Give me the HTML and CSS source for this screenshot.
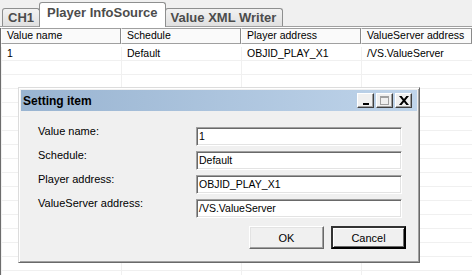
FILE: index.html
```html
<!DOCTYPE html>
<html lang="en">
<head>
  <meta charset="UTF-8" />
  <title>Setting item</title>
  <link rel="stylesheet" href="styles.css">
</head>
<body>
  <div class="tabs">
    <div class="tab">CH1</div>
    <div class="tab active">Player InfoSource</div>
    <div class="tab">Value XML Writer</div>
  </div>

  <div class="list">
    <div class="list-head">
      <div class="col">Value name</div>
      <div class="col">Schedule</div>
      <div class="col">Player address</div>
      <div class="col">ValueServer address</div>
    </div>
    <div class="list-body">
      <div class="row">
        <div class="cell">1</div>
        <div class="cell">Default</div>
        <div class="cell">OBJID_PLAY_X1</div>
        <div class="cell">/VS.ValueServer</div>
      </div>
    </div>
  </div>

  <div class="dialog">
    <div class="titlebar">
      <span class="title">Setting item</span>
      <div class="caption-btns">
        <div class="cap-btn"><span class="glyph-min"></span></div>
        <div class="cap-btn"><span class="glyph-max"></span></div>
        <div class="cap-btn">
          <svg width="10" height="9" viewBox="0 0 10 9"><path d="M0 0h2.6L5 3.1 7.4 0H10L6.3 4.5 10 9H7.4L5 5.9 2.6 9H0l3.7-4.5z" fill="#000"/></svg>
        </div>
      </div>
    </div>
    <div class="dialog-body">
      <div class="field"><label>Value name:</label><div class="edit">1</div></div>
      <div class="field"><label>Schedule:</label><div class="edit">Default</div></div>
      <div class="field"><label>Player address:</label><div class="edit">OBJID_PLAY_X1</div></div>
      <div class="field"><label>ValueServer address:</label><div class="edit">/VS.ValueServer</div></div>
      <div class="buttons">
        <button class="btn">OK</button>
        <button class="btn default">Cancel</button>
      </div>
    </div>
  </div>
</body>
</html>
```

FILE: styles.css
```css
body {
  margin: 0;
  width: 472px;
  height: 275px;
  overflow: hidden;
  background: #fff;
  font-family: 'Liberation Sans', Arial, sans-serif;
  font-size: 11px;
  color: #000;
  position: relative;
}
.tabs {
  height: 27px;
  box-sizing: border-box;
  background: #f0f0f0;
  border-bottom: 1px solid #a0a0a0;
  display: flex;
  align-items: flex-end;
  padding-left: 2px;
}
.tab {
  height: 18px;
  padding: 0 5px;
  box-sizing: border-box;
  border: 1px solid #8e8f8f;
  border-bottom: none;
  border-radius: 3px 3px 0 0;
  background: linear-gradient(#f2f2f2, #e0e0e0);
  font-weight: bold;
  font-size: 13px;
  line-height: 17px;
  color: #4c4c4c;
}
.tab + .tab { margin-left: -1px; }
.tab:last-child { padding-right: 6px; }
.tab.active {
  height: 25px;
  line-height: 20px;
  background: #fff;
  padding: 0 7px;
  margin-bottom: -1px;
  position: relative;
  z-index: 1;
}
.list {
  border-left: 1px solid #6d6d6d;
  margin-top: 1px;
  height: 250px;
  font-size: 10.5px;
}
.list-head {
  display: grid;
  grid-template-columns: 120px 120px 120px 1fr;
  height: 16px;
}
.col {
  box-sizing: border-box;
  border: 1px solid #a0a0a0;
  border-left: 1px solid #fff;
  border-right-color: #8a8a8a;
  background: #fafafa;
  padding-left: 5px;
  line-height: 13px;
  white-space: nowrap;
  overflow: hidden;
}
.list-body {
  margin-top: 3px;
  height: 230px;
  background:
    linear-gradient(to bottom, transparent 13px, #f0f0f0 13px) 0 0 / 100% 14px,
    linear-gradient(to right, transparent 119px, #f0f0f0 119px) 1px 0 / 120px 100%;
}
.row {
  display: grid;
  grid-template-columns: 120px 120px 120px 1fr;
  height: 14px;
}
.cell {
  padding-left: 6px;
  line-height: 13px;
  white-space: nowrap;
}
.dialog {
  position: absolute;
  left: 18px;
  top: 87px;
  width: 402px;
  height: 176px;
  box-sizing: border-box;
  background: #f0f0f0;
  border: 1px solid;
  border-color: #dcdcdc #696969 #696969 #dcdcdc;
  box-shadow: inset 1px 1px #fff, inset -1px -1px #a0a0a0;
  padding: 2px;
  display: flex;
  flex-direction: column;
}
.titlebar {
  height: 21px;
  flex: none;
  background: linear-gradient(to right, #99b4d1, #bfd4ea);
  display: flex;
  align-items: center;
  padding: 0 5px 0 2px;
}
.title {
  font-weight: bold;
  font-size: 12px;
  flex: 1;
}
.caption-btns {
  display: flex;
  gap: 2px;
}
.cap-btn {
  width: 17px;
  height: 15px;
  box-sizing: border-box;
  background: #f0f0f0;
  border: 1px solid;
  border-color: #fff #404040 #404040 #fff;
  box-shadow: inset -1px -1px #a0a0a0;
  display: flex;
  align-items: center;
  justify-content: center;
}
.glyph-min {
  width: 6px;
  height: 2px;
  background: #000;
  margin-top: 6px;
}
.glyph-max {
  width: 7px;
  height: 6px;
  border: 1px solid #a0a0a0;
  border-top-width: 2px;
}
.dialog-body {
  display: flex;
  flex-direction: column;
  gap: 5px;
  padding: 16px 11px 0 17px;
}
.field {
  display: flex;
  align-items: flex-start;
}
.field label {
  width: 158px;
  line-height: 13px;
  margin-top: -2px;
}
.edit {
  width: 206px;
  height: 19px;
  box-sizing: border-box;
  background: #fff;
  border: 1px solid;
  border-color: #a0a0a0 #fff #fff #a0a0a0;
  box-shadow: inset 1px 1px #696969, inset -1px -1px #e3e3e3;
  padding: 0 2px;
  font-size: 10.5px;
  line-height: 17px;
  white-space: nowrap;
}
.buttons {
  display: flex;
  justify-content: flex-end;
  gap: 7px;
  margin-top: 3px;
}
.btn {
  width: 75px;
  height: 23px;
  font-family: inherit;
  font-size: 11px;
  color: #000;
  background: #f0f0f0;
  border: 1px solid;
  border-color: #fff #696969 #696969 #fff;
  box-shadow: inset -1px -1px #a0a0a0, inset 1px 1px #e3e3e3;
  padding: 0;
}
.btn.default {
  border: 2px solid #000;
  border-top-color: #333;
  border-left-color: #333;
  box-shadow: inset 1px 1px #fff, inset -1px -1px #696969;
}
```
